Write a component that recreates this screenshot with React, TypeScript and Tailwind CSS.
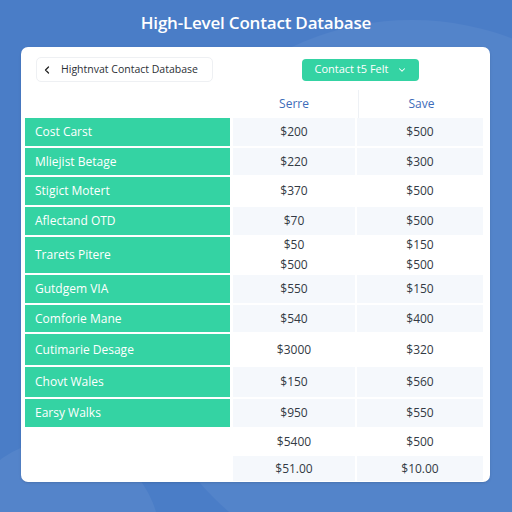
import { ChevronLeft, ChevronDown } from "lucide-react"

type Row = { name?: string; a: string[]; b: string[]; h: number; shade: boolean }

const rows: Row[] = [
  { name: "Cost Carst", a: ["$200"], b: ["$500"], h: 28, shade: true },
  { name: "Mliejist Betage", a: ["$220"], b: ["$300"], h: 27, shade: true },
  { name: "Stigict Motert", a: ["$370"], b: ["$500"], h: 28, shade: false },
  { name: "Aflectand OTD", a: ["$70"], b: ["$500"], h: 28, shade: true },
  { name: "Trarets Pitere", a: ["$50", "$500"], b: ["$150", "$500"], h: 36, shade: false },
  { name: "Gutdgem VIA", a: ["$550"], b: ["$150"], h: 28, shade: true },
  { name: "Comforie Mane", a: ["$540"], b: ["$400"], h: 27, shade: true },
  { name: "Cutimarie Desage", a: ["$3000"], b: ["$320"], h: 31, shade: false },
  { name: "Chovt Wales", a: ["$150"], b: ["$560"], h: 30, shade: true },
  { name: "Earsy Walks", a: ["$950"], b: ["$550"], h: 28, shade: true },
  { a: ["$5400"], b: ["$500"], h: 25, shade: false },
  { a: ["$51.00"], b: ["$10.00"], h: 25, shade: true },
]

function Cell({ lines, shade }: { lines: string[]; shade: boolean }) {
  return (
    <div
      className={`flex min-h-0 flex-col items-center justify-center text-[12px] leading-[20px] text-[#333a44] ${
        shade ? "bg-[#f5f8fc]" : "bg-white"
      }`}
    >
      {lines.map((l, i) => (
        <span key={i}>{l}</span>
      ))}
    </div>
  )
}

export default function App() {
  return (
    <div
      className="relative h-[512px] w-[512px] overflow-hidden bg-[#4a7dc7]"
      style={{ fontFamily: "'Open Sans', 'Liberation Sans', sans-serif" }}
    >
      {/* soft background arcs */}
      <div className="pointer-events-none absolute -right-[180px] top-[20px] h-[560px] w-[560px] rounded-full bg-white/[0.05]" />
      <div className="pointer-events-none absolute -left-[40px] top-[440px] h-[200px] w-[200px] rounded-full bg-white/[0.06]" />

      <div className="relative flex flex-col items-center pt-[9px]">
        <h1 className="text-[17px] font-semibold leading-[28px] tracking-[-0.2px] text-white">
          High-Level Contact Database
        </h1>

        <div className="mt-[10px] ml-[-1px] flex h-[435px] w-[469px] flex-col rounded-[7px] bg-white pl-[4px] pr-[7px] pt-[10px] shadow-sm">
          {/* header */}
          <div className="flex h-[25px] items-center">
            <div className="ml-[11px] flex h-[25px] w-[177px] items-center gap-[8px] rounded-[5px] border border-[#eef0f3] px-[4px] text-[10.5px] text-[#2b2f36]">
              <ChevronLeft className="h-[12px] w-[12px] text-[#222]" strokeWidth={2.5} />
              <span>Hightnvat Contact Database</span>
            </div>
            <div className="ml-[89px] flex h-[22px] w-[117px] items-center justify-center gap-[8px] rounded-[4px] bg-[#34d3a3] text-[11px] text-white">
              <span>Contact t5 Felt</span>
              <ChevronDown className="h-[10px] w-[10px]" strokeWidth={2.5} />
            </div>
          </div>

          {/* column headers */}
          <div className="mt-[8px] grid h-[28px] grid-cols-[205px_124px_126px] gap-x-[2px]">
            <div />
            <div className="flex items-center justify-center text-[12px] text-[#3d6cb9]">Serre</div>
            <div className="flex items-center justify-center border-l border-[#eef1f5] text-[12px] text-[#3d6cb9]">
              Save
            </div>
          </div>

          {/* rows */}
          <div className="flex flex-col gap-y-[2px]">
            {rows.map((r, i) => (
              <div
                key={i}
                className="grid grid-cols-[205px_3px_122px_2px_126px] grid-rows-1"
                style={{ height: r.h }}
              >
                {r.name ? (
                  <div className="flex items-center bg-[#34d3a3] pl-[10px] text-[12px] text-white">{r.name}</div>
                ) : (
                  <div />
                )}
                <div />
                <Cell lines={r.a} shade={r.shade} />
                <div />
                <Cell lines={r.b} shade={r.shade} />
              </div>
            ))}
          </div>
        </div>
      </div>
    </div>
  )
}
